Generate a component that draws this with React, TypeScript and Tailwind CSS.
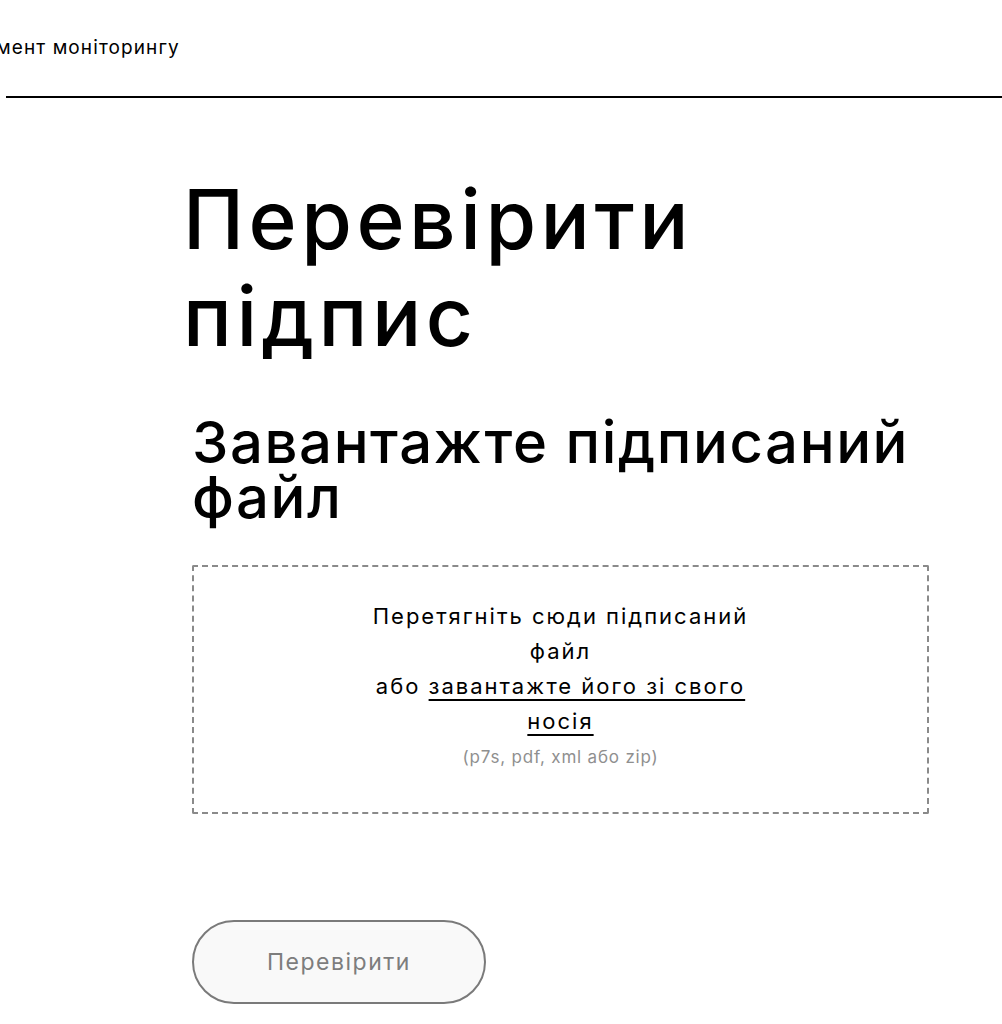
const font = { fontFamily: "Inter, 'Noto Sans', sans-serif" };

export default function App() {
  return (
    <div className="min-h-screen bg-white text-black" style={font}>
      <header className="flex h-[96px] items-center overflow-hidden">
        <span className="-ml-[4px] pb-[2px] text-[19px] leading-none tracking-[1.1px]">
          мент моніторингу
        </span>
      </header>
      <div className="ml-[6px] h-[2px] bg-black" />

      <main className="pl-[183px] pr-[73px]">
        <h1 className="mt-[73px] text-[82px] font-medium leading-[97px] tracking-[4.5px]">
          Перевірити
          <br />
          підпис
        </h1>

        <section className="pl-[9px]">
          <h2 className="mt-[50px] text-[58px] font-medium leading-[55px] tracking-[1.6px]">
            Завантажте підписаний
            <br />
            файл
          </h2>

          <div className="mt-[40px] flex h-[249px] flex-col items-center rounded-[2px] border-2 border-dashed border-[#8a8a8a] pt-[32px] text-center">
            <p className="w-[400px] text-[22px] leading-[35px] tracking-[2px]">
              Перетягніть сюди підписаний файл
              <br />
              або{" "}
              <a href="#" className="underline decoration-[1.5px] underline-offset-[5px]">
                завантажте його зі свого носія
              </a>
            </p>
            <p className="mt-[6px] text-[17px] leading-[24px] tracking-[0.8px] text-[#8f8f8f]">
              (p7s, pdf, xml або zip)
            </p>
          </div>

          <button
            type="button"
            className="mt-[106px] flex h-[84px] w-[294px] items-center justify-center rounded-full border-2 border-[#7a7a7a] bg-[#f9f9f9] text-[23px] tracking-[1.5px] text-[#7d7d7d]"
          >
            Перевірити
          </button>
        </section>
      </main>
    </div>
  );
}
